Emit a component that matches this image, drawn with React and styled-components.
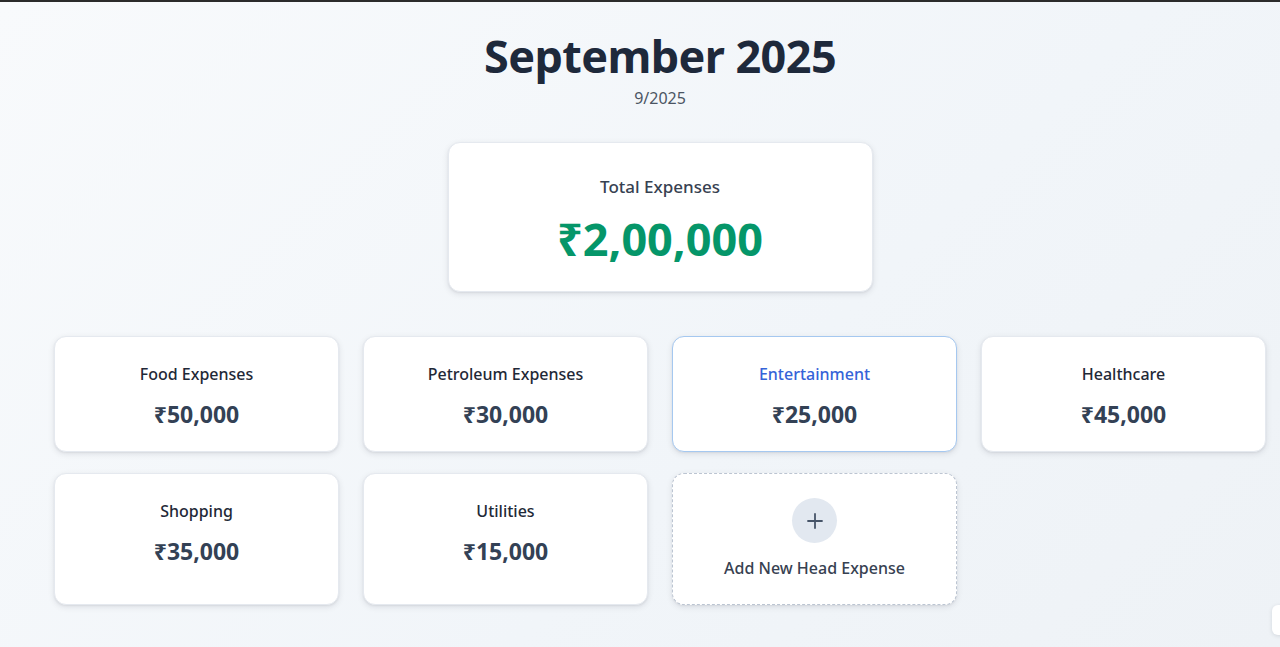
import React from "react";
import styled, { createGlobalStyle } from "styled-components";

const Global = createGlobalStyle`
  html, body { margin: 0; padding: 0; }
  body {
    font-family: "Noto Sans", "Open Sans", sans-serif;
    background: #f3f6f9;
  }
  * { box-sizing: border-box; }
`;

const Page = styled.div`
  position: relative;
  min-height: 647px;
  border-top: 2px solid #2b2b2b;
  background: linear-gradient(135deg, #f8fafc 0%, #f1f5f9 60%, #eef2f6 100%);
  padding: 23px 14px 40px 54px;
  overflow: hidden;
`;

const Header = styled.header`
  display: flex;
  flex-direction: column;
  align-items: center;
`;

const Title = styled.h1`
  margin: 0;
  font-size: 45px;
  line-height: 62px;
  font-weight: 700;
  color: #1e293b;
  letter-spacing: -0.6px;
`;

const Subtitle = styled.div`
  font-size: 16px;
  line-height: 22px;
  color: #4b5563;
`;

const TotalWrap = styled.div`
  display: flex;
  justify-content: center;
  margin-top: 33px;
`;

const Card = styled.div`
  background: #ffffff;
  border-radius: 12px;
  border: 1px solid ${(p) => (p.$active ? "#a5c8f0" : "#e5e9ef")};
  box-shadow: 0 2px 6px rgba(15, 23, 42, 0.1), 0 1px 2px rgba(15, 23, 42, 0.06);
  display: flex;
  flex-direction: column;
  align-items: center;
  text-align: center;
`;

const TotalCard = styled(Card)`
  width: 425px;
  padding: 32px 24px 24px;
`;

const TotalLabel = styled.div`
  font-size: 17px;
  line-height: 24px;
  color: #374151;
  font-weight: 500;
`;

const TotalAmount = styled.div`
  margin-top: 12px;
  font-size: 45px;
  line-height: 56px;
  font-weight: 700;
  color: #059669;
`;

const Grid = styled.div`
  margin-top: 44px;
  display: grid;
  grid-template-columns: repeat(4, 1fr);
  column-gap: 24px;
  row-gap: 21px;
`;

const HeadCard = styled(Card)`
  padding: 25px 20px 20px;
  justify-content: flex-start;
`;

const HeadTitle = styled.div`
  font-size: 16px;
  line-height: 24px;
  font-weight: 500;
  color: ${(p) => (p.$active ? "#3563d8" : "#1f2937")};
`;

const HeadAmount = styled.div`
  margin-top: 11px;
  font-size: 23px;
  line-height: 34px;
  font-weight: 700;
  color: #334155;
`;

const AddCard = styled(Card)`
  border: 1.5px dashed #bcc5d2;
  padding: 24px 20px 24px;
  cursor: pointer;
`;

const PlusCircle = styled.div`
  width: 45px;
  height: 45px;
  border-radius: 50%;
  background: #e2e8f0;
  display: flex;
  align-items: center;
  justify-content: center;
  color: #475569;
`;

const AddLabel = styled.div`
  margin-top: 13px;
  font-size: 16px;
  line-height: 24px;
  font-weight: 500;
  color: #374151;
`;

const FloatTab = styled.div`
  position: absolute;
  right: -24px;
  top: 603px;
  width: 32px;
  height: 30px;
  border-radius: 6px;
  background: #ffffff;
  box-shadow: 0 1px 4px rgba(15, 23, 42, 0.12);
`;

const heads = [
  { name: "Food Expenses", amount: "₹50,000" },
  { name: "Petroleum Expenses", amount: "₹30,000" },
  { name: "Entertainment", amount: "₹25,000", active: true },
  { name: "Healthcare", amount: "₹45,000" },
  { name: "Shopping", amount: "₹35,000" },
  { name: "Utilities", amount: "₹15,000" },
];

export default function App() {
  return (
    <>
      <Global />
      <Page>
        <Header>
          <Title>September 2025</Title>
          <Subtitle>9/2025</Subtitle>
        </Header>
        <TotalWrap>
          <TotalCard>
            <TotalLabel>Total Expenses</TotalLabel>
            <TotalAmount>₹2,00,000</TotalAmount>
          </TotalCard>
        </TotalWrap>
        <Grid>
          {heads.map((h) => (
            <HeadCard key={h.name} $active={h.active}>
              <HeadTitle $active={h.active}>{h.name}</HeadTitle>
              <HeadAmount>{h.amount}</HeadAmount>
            </HeadCard>
          ))}
          <AddCard>
            <PlusCircle>
              <svg width="18" height="18" viewBox="0 0 18 18" fill="none">
                <path d="M9 2v14M2 9h14" stroke="currentColor" strokeWidth="1.8" strokeLinecap="round" />
              </svg>
            </PlusCircle>
            <AddLabel>Add New Head Expense</AddLabel>
          </AddCard>
        </Grid>
        <FloatTab />
      </Page>
    </>
  );
}
